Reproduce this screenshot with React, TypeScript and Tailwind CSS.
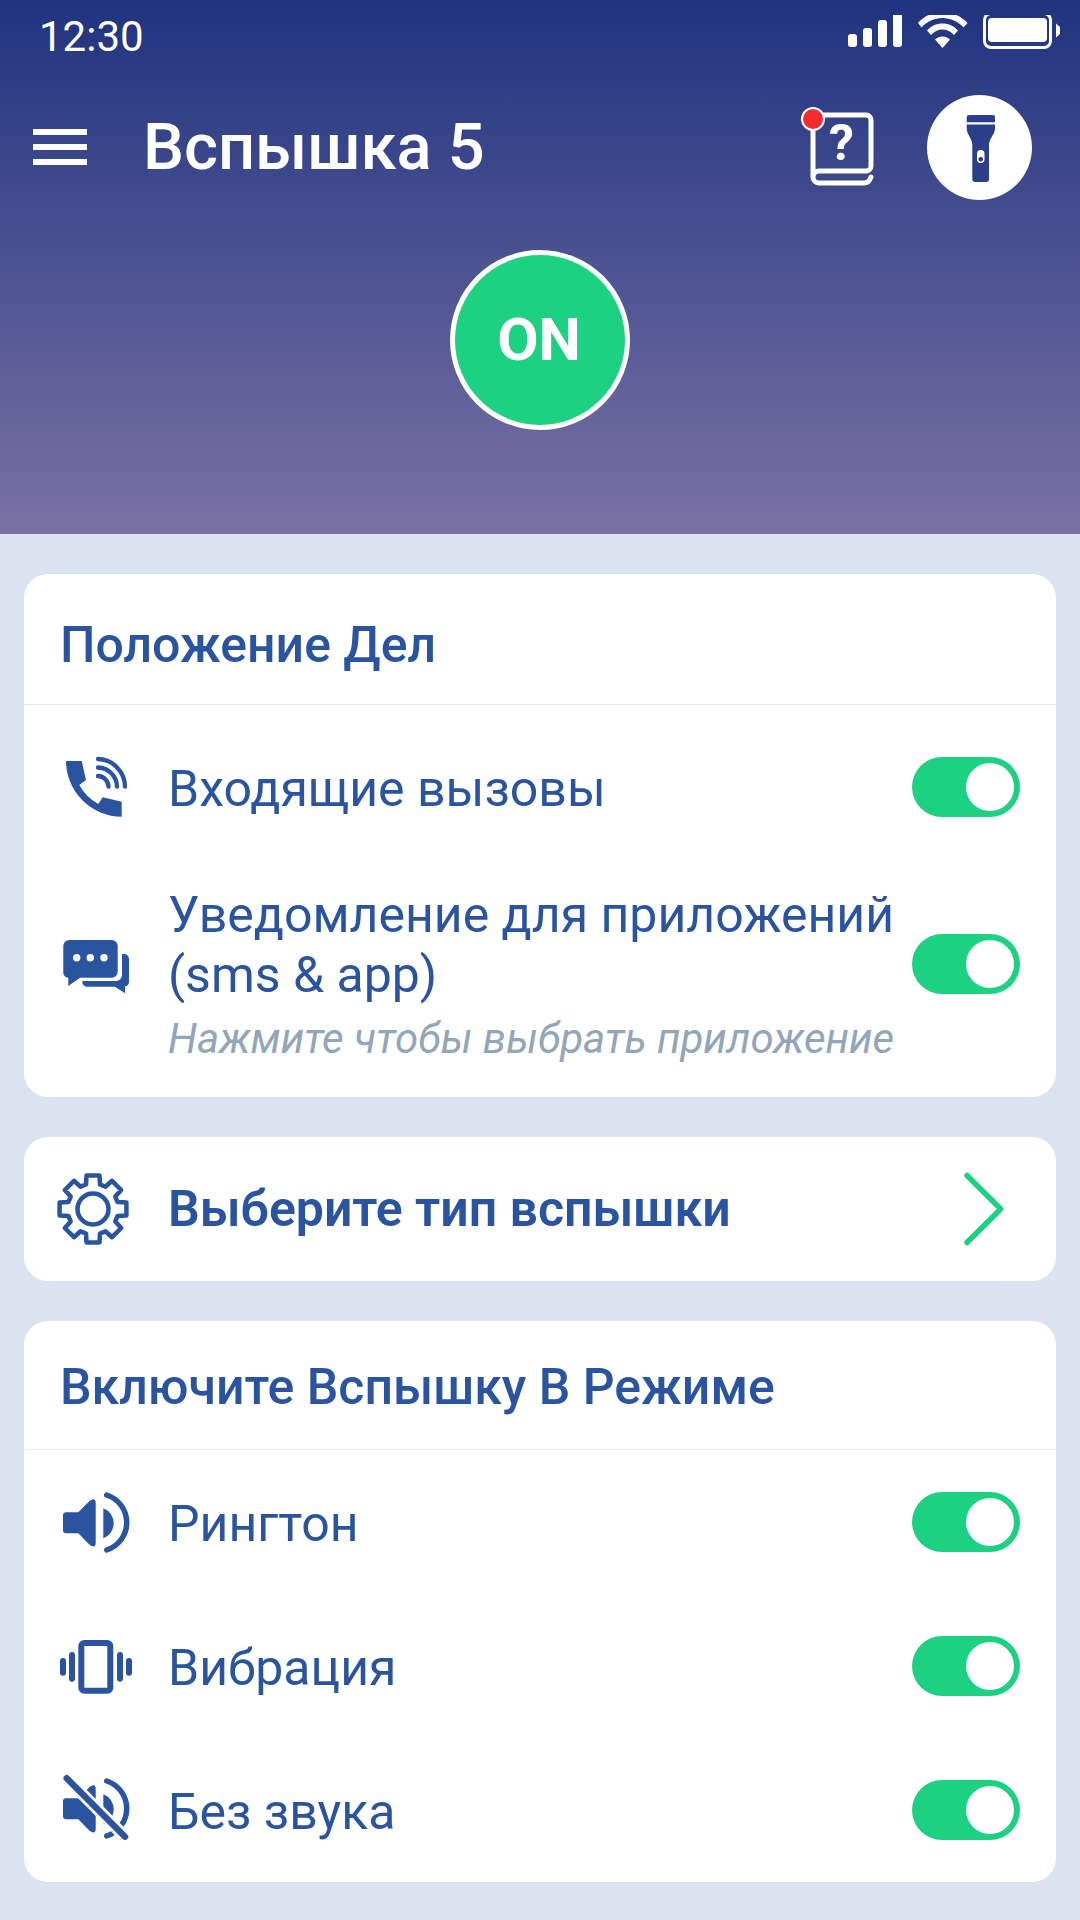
const blue = "#2a54a0"

// outline of the settings gear, 8 teeth around (39, 40)
const gearPoints = (() => {
  const pts: string[] = []
  for (let i = 0; i < 8; i++) {
    const a = (i * 45 - 90) * (Math.PI / 180)
    const add = (r: number, d: number) => {
      const t = a + d * (Math.PI / 180)
      pts.push(`${(39 + r * Math.cos(t)).toFixed(1)},${(40 + r * Math.sin(t)).toFixed(1)}`)
    }
    add(25.5, -16)
    add(34, -11)
    add(34, 11)
    add(25.5, 16)
  }
  return pts.join(" ")
})()

const IconBox = ({ children }: { children: React.ReactNode }) => (
  <svg viewBox="0 0 80 80" className="h-20 w-20 shrink-0">
    {children}
  </svg>
)

const PhoneIcon = () => (
  <IconBox>
    <path
      d="M12 14H27.700L32 33 25.300 38A48.700 48.700 0 0 0 44.300 57L48.700 50.300 67.700 54.700V69.700A56 56 0 0 1 12 14Z"
      fill={blue}
    />
    <g fill="none" stroke={blue} strokeWidth="4.300" strokeLinecap="round">
      <path d="M44 29A11 11 0 0 1 54.500 39.700" />
      <path d="M44 20.500A19.500 19.500 0 0 1 63 39.700" />
      <path d="M44 12A28 28 0 0 1 71 39.700" />
    </g>
  </IconBox>
)

const ChatIcon = () => (
  <IconBox>
    <path
      d="M15.300 16H57.700A6 6 0 0 1 63.700 22V47.700A6 6 0 0 1 57.700 53.700H26L14.300 62V53.700A5 5 0 0 1 9.300 48V22A6 6 0 0 1 15.300 16Z"
      fill={blue}
    />
    <path
      d="M68 30H70A5 5 0 0 1 75 35V57.700A5 5 0 0 1 71 62.500V69.300L61 62.700H33A5 5 0 0 1 28.300 57H62A6 6 0 0 0 68 51Z"
      fill={blue}
    />
    <circle cx="22.700" cy="33.700" r="3.700" fill="#fff" />
    <circle cx="36.300" cy="33.700" r="3.700" fill="#fff" />
    <circle cx="50" cy="33.700" r="3.700" fill="#fff" />
  </IconBox>
)

const GearIcon = () => (
  <IconBox>
    <polygon points={gearPoints} fill="none" stroke={blue} strokeWidth="4.500" strokeLinejoin="round" />
    <circle cx="39" cy="40" r="15.500" fill="none" stroke={blue} strokeWidth="4.500" />
  </IconBox>
)

const Speaker = () => (
  <>
    <path
      d="M12 30.300H24.300L35.500 19Q41.700 14.500 41.700 21V60.500Q41.700 67 35.500 62.700L24.300 51.300H12A3 3 0 0 1 9 48.300V33.300A3 3 0 0 1 12 30.300Z"
      fill={blue}
    />
    <path d="M49.300 26.300A16 16 0 0 1 49.300 56.300Z" fill={blue} />
    <path d="M52.700 13A28.900 28.900 0 0 1 52.700 68" fill="none" stroke={blue} strokeWidth="5.500" strokeLinecap="round" />
  </>
)

const SoundIcon = () => (
  <IconBox>
    <Speaker />
  </IconBox>
)

const VibrateIcon = () => (
  <IconBox>
    <rect x="27.300" y="17" width="29" height="47.700" rx="3" fill="none" stroke={blue} strokeWidth="6" />
    <g stroke={blue} strokeWidth="6" strokeLinecap="round">
      <path d="M18 29V52.700M9 35V46.700M66 29V52.700M75 35V46.700" />
    </g>
  </IconBox>
)

const MuteIcon = () => (
  <IconBox>
    <g transform="translate(0 -2)">
      <Speaker />
    </g>
    <path d="M12.700 8.300L71 66.700" stroke="#fff" strokeWidth="12" />
    <path d="M12.700 8.300L71 66.700" stroke={blue} strokeWidth="6.500" strokeLinecap="round" />
  </IconBox>
)

const Toggle = () => (
  <div className="flex h-[60px] w-[108px] shrink-0 items-center justify-end rounded-full bg-[#1cd282] pr-1.5">
    <div className="h-12 w-12 rounded-full bg-white" />
  </div>
)

const StatusBar = () => (
  <div className="flex h-[70px] items-center justify-between pl-[39px] pr-5">
    <span className="pt-1 text-[42px] leading-none text-white">12:30</span>
    <svg viewBox="0 0 220 40" className="h-10 w-[220px]">
      <g fill="#fff">
        <rect x="8" y="19" width="9" height="13" rx="3" />
        <rect x="23" y="13" width="9" height="19" rx="3" />
        <rect x="38" y="5" width="9" height="27" rx="3" />
        <rect x="53" y="-2" width="9" height="34" rx="3" />
        <path d="M102.500 33L95 24.500C99.500 20.500 105.500 20.500 110 24.500Z" />
        <path d="M102.500 -3C112 -3 121 1 127.500 8L123.500 12.500C118 6.500 110.500 3 102.500 3S87 6.500 81.500 12.500L78 8C84 1 93 -3 102.500 -3Z" />
        <path d="M102.500 8.500C108.500 8.500 114 11 118 15.500L114 20C111 16.500 107 14.500 102.500 14.500S94 16.500 91 20L87 15.500C91 11 96.500 8.500 102.500 8.500Z" />
        <rect x="148" y="3" width="59" height="24" rx="4" />
        <path d="M216 8.500L220 12V19L216 22.500Z" />
      </g>
      <rect x="144.500" y="-1.500" width="66" height="34" rx="6.500" fill="none" stroke="#fff" strokeWidth="3" />
    </svg>
  </div>
)

const Toolbar = () => (
  <div className="mt-[24px] flex h-[106px] items-center pl-[33px] pr-[48px]">
    <div className="flex w-[54px] flex-col gap-[9px]">
      <div className="h-1.5 bg-white" />
      <div className="h-1.5 bg-white" />
      <div className="h-1.5 bg-white" />
    </div>
    <span className="ml-[56px] flex-1 text-[65px] font-medium leading-none text-white">Вспышка 5</span>
    <div className="relative mr-[47px] h-20 w-20">
      <svg viewBox="0 0 80 80" className="h-20 w-20">
        <path
          d="M13 10V70A6 6 0 0 0 19 76H64Q69 76 71 70M13 70A6 6 0 0 1 19 64H66A5 5 0 0 0 71 59V13A5 5 0 0 0 66 8H13"
          fill="none"
          stroke="#fff"
          strokeWidth="5"
          strokeLinecap="round"
        />
        <text x="41.500" y="52.700" textAnchor="middle" fontSize="50" fontWeight="700" fill="#fff" fontFamily="Roboto, sans-serif">
          ?
        </text>
      </svg>
      <div className="absolute left-[1px] top-0 h-6 w-6 rounded-full border-2 border-white bg-[#f52c2f]" />
    </div>
    <div className="h-[105px] w-[105px] rounded-full bg-white">
      <svg viewBox="0 0 105 105" className="h-[105px] w-[105px]">
        <path d="M42 20H66Q68 20 68 22V27.300H39.700V22Q39.700 20 42 20Z" fill="#2a3f88" />
        <path
          d="M39.700 29.500H68V33C68 40 62 43 62 50V84A3 3 0 0 1 59 87H48.300A3 3 0 0 1 45.300 84V50C45.300 43 39.700 40 39.700 33Z"
          fill="#2a3f88"
        />
        <rect x="50" y="55" width="7.500" height="13" rx="3.700" fill="#fff" />
        <rect x="51.500" y="62" width="4.500" height="4.500" rx="2" fill="#2a3f88" />
      </svg>
    </div>
  </div>
)

const Row = ({ icon, label }: { icon: React.ReactNode; label: string }) => (
  <div className="flex h-[144px] items-center pl-[30px] pr-[36px]">
    {icon}
    <span className="ml-[34px] flex-1 pt-1 text-[50px] leading-none">{label}</span>
    <Toggle />
  </div>
)

export default function App() {
  return (
    <div className="flex h-[1920px] w-[1080px] flex-col overflow-hidden bg-[#dce3f0] font-[Roboto,sans-serif] text-[#2a54a0]">
      {/* Header */}
      <header className="h-[534px] shrink-0 bg-gradient-to-b from-[#20337f] to-[#7b71a4]">
        <StatusBar />
        <Toolbar />
        <div className="mt-[50px] flex justify-center">
          <div className="flex h-[180px] w-[180px] items-center justify-center rounded-full border-[5px] border-white bg-[#1cd282] pr-0.5 text-[60px] font-bold text-white">
            ON
          </div>
        </div>
      </header>

      {/* Cards */}
      <main className="flex flex-col gap-10 px-6 pt-10">
        <section className="rounded-[24px] bg-white">
          <h2 className="flex h-[131px] items-center border-b border-[#e3e7ee] pl-[36px] pt-3 text-[50px] font-medium">
            Положение Дел
          </h2>
          <div className="pb-[28px] pt-[10px]">
            <Row icon={<PhoneIcon />} label="Входящие вызовы" />
            <div className="flex h-[210px] items-center pl-[30px] pr-[36px]">
              <ChatIcon />
              <div className="ml-[34px] min-w-0 flex-1 pt-[26px]">
                <div className="text-[50px] leading-[60px]">Уведомление для приложений (sms &amp; app)</div>
                <div className="mt-1 whitespace-nowrap text-[42px] italic leading-[60px] text-[#93a5b9]">
                  Нажмите чтобы выбрать приложение
                </div>
              </div>
              <Toggle />
            </div>
          </div>
        </section>

        <section className="flex h-[144px] items-center rounded-[24px] bg-white pl-[30px] pr-[50px]">
          <GearIcon />
          <span className="ml-[34px] flex-1 text-[50px] font-semibold leading-none">Выберите тип вспышки</span>
          <svg viewBox="0 0 44 76" className="h-[76px] w-[44px]">
            <path d="M5 4.500L38.700 38 5 71.500" fill="none" stroke="#1cd282" strokeWidth="5.500" strokeLinecap="round" strokeLinejoin="round" />
          </svg>
        </section>

        <section className="rounded-[24px] bg-white">
          <h2 className="flex h-[129px] items-center border-b border-[#e3e7ee] pl-[36px] pt-1 text-[50px] font-medium">
            Включите Вспышку В Режиме
          </h2>
          <Row icon={<SoundIcon />} label="Рингтон" />
          <Row icon={<VibrateIcon />} label="Вибрация" />
          <Row icon={<MuteIcon />} label="Без звука" />
        </section>
      </main>
    </div>
  )
}
